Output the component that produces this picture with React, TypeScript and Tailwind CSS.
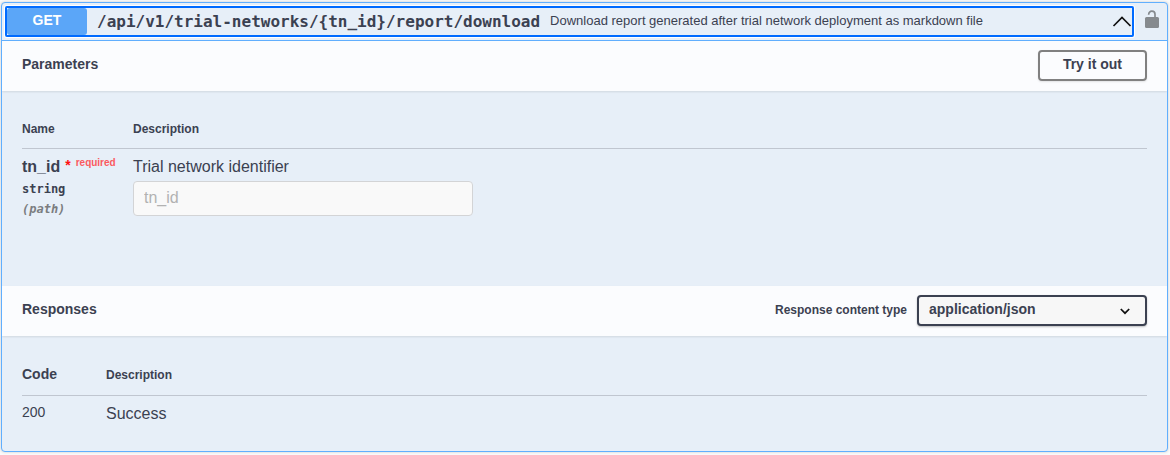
import type { ReactNode } from "react";

function SectionHeader({ title, children }: { title: string; children?: ReactNode }) {
  return (
    <div className="relative flex h-[50px] items-center bg-[#fbfcfe] px-5 pb-px shadow-[0_1px_2px_rgba(0,0,0,0.1)]">
      <h4 className="flex-1 pb-0.5 text-[14px] font-bold">{title}</h4>
      {children}
    </div>
  );
}

function Summary() {
  return (
    <div className="flex items-center border-b border-[#61affe] py-[3px] pr-[7px] pl-[3px]">
      <button
        type="button"
        aria-expanded="true"
        className="flex h-[31px] min-w-0 flex-1 items-center rounded-[2px] border-2 border-[#006bff] text-left shadow-[0_0_0_1px_#ffffff]"
      >
        <span className="flex h-[27px] w-20 items-center justify-center rounded-[3px] bg-[#5ba6f8] pb-0.5 text-[14px] font-bold text-white">
          GET
        </span>
        <span className="px-2.5 font-['DejaVu_Sans_Mono',monospace] text-[16px] font-bold whitespace-nowrap">
          /api/v1/trial-networks/&#123;tn_id&#125;/report/download
        </span>
        <span className="min-w-0 flex-1 truncate pb-0.5 text-[13px]">
          Download report generated after trial network deployment as markdown file
        </span>
        <svg viewBox="0 0 20 20" className="size-5 shrink-0" fill="none" stroke="#111" strokeWidth="1.7" aria-hidden="true">
          <path d="M1.500 14 10 5.500l8.500 8.500" />
        </svg>
      </button>
      <button type="button" aria-label="Authorize" className="ml-2.5 pb-1">
        <svg viewBox="0 0 16 20" className="h-5 w-4" aria-hidden="true">
          <path d="M4.700 4.800V4.300a3 3 0 0 1 6.300 0V8" fill="none" stroke="#868a8e" strokeWidth="1.700" />
          <rect x="1" y="7" width="14" height="11" rx="1.500" fill="#868a8e" />
        </svg>
      </button>
    </div>
  );
}

export default function App() {
  return (
    <main className="bg-[#fafafa] px-px pt-0.5 pr-0.5 pb-[3px] font-['Liberation_Sans',Arial,sans-serif] text-[#3b4151]">
      <section className="overflow-hidden rounded-[4px] border border-[#61affe] bg-[#e7eff8] shadow-[0_0_3px_rgba(0,0,0,0.19)]">
        <Summary />
        <SectionHeader title="Parameters">
          <button
            type="button"
            className="h-[31px] rounded-[4px] border-2 border-[#808080] px-[23px] pb-0.5 text-[14px] font-bold shadow-[0_1px_2px_rgba(0,0,0,0.1)]"
          >
            Try it out
          </button>
        </SectionHeader>
        <div className="px-5 pt-5 pb-[67px]">
          <table className="w-full border-collapse text-left">
            <thead>
              <tr className="h-[37px] border-b border-[#c0c6d0] text-[12px]">
                <th className="w-[111px] font-bold">Name</th>
                <th className="font-bold">Description</th>
              </tr>
            </thead>
            <tbody>
              <tr className="align-top">
                <td className="pt-2">
                  <div className="flex h-5 items-start">
                    <label htmlFor="tn_id" className="text-[16px] leading-5 font-bold">tn_id</label>
                    <span className="ml-[5px] text-[14px] leading-4 font-bold text-[#ff1010]">*</span>
                    <span className="ml-[5px] text-[10px] leading-3 font-bold text-[#fb5a5f]">required</span>
                  </div>
                  <div className="pt-0.5 font-['DejaVu_Sans_Mono',monospace] text-[12px] leading-5 font-bold">string</div>
                  <div className="font-['DejaVu_Sans_Mono',monospace] text-[12px] leading-5 font-bold text-[#7b7d80] italic">(path)</div>
                </td>
                <td className="pt-2">
                  <p className="text-[16px] leading-5">Trial network identifier</p>
                  <input
                    id="tn_id"
                    type="text"
                    disabled
                    placeholder="tn_id"
                    className="mt-1 block h-[35px] w-[340px] rounded-[4px] border border-[#d3d4d6] bg-[#f9f9f9] px-2.5 text-[16px] placeholder:text-[#b2b2b2]"
                  />
                </td>
              </tr>
            </tbody>
          </table>
        </div>
        <SectionHeader title="Responses">
          <label htmlFor="content-type" className="mr-2.5 text-[12px] font-bold">Response content type</label>
          <div className="relative">
            <select
              id="content-type"
              className="block h-[31px] w-[230px] appearance-none rounded-[4px] border-2 border-[#3b4151] bg-[#f7f7f7] pr-10 pb-0.5 pl-2.5 text-[14px] font-bold shadow-[0_1px_2px_rgba(0,0,0,0.25)]"
            >
              <option>application/json</option>
            </select>
            <svg viewBox="0 0 10 10" className="pointer-events-none absolute top-[11px] right-[17px] size-2.5" fill="none" stroke="#111" strokeWidth="1.700" aria-hidden="true">
              <path d="M.8 3 5 7.200 9.200 3" />
            </svg>
          </div>
        </SectionHeader>
        <div className="px-5 pt-5 pb-[27px]">
          <table className="w-full border-collapse text-left">
            <thead>
              <tr className="h-10 border-b border-[#c0c6d0]">
                <th className="w-[84px] pb-0.5 text-[14px] font-bold">Code</th>
                <th className="text-[12px] font-bold">Description</th>
              </tr>
            </thead>
            <tbody>
              <tr className="align-top">
                <td className="pt-2 text-[14px] leading-4">200</td>
                <td className="pt-2 text-[16px] leading-5">Success</td>
              </tr>
            </tbody>
          </table>
        </div>
      </section>
    </main>
  );
}
